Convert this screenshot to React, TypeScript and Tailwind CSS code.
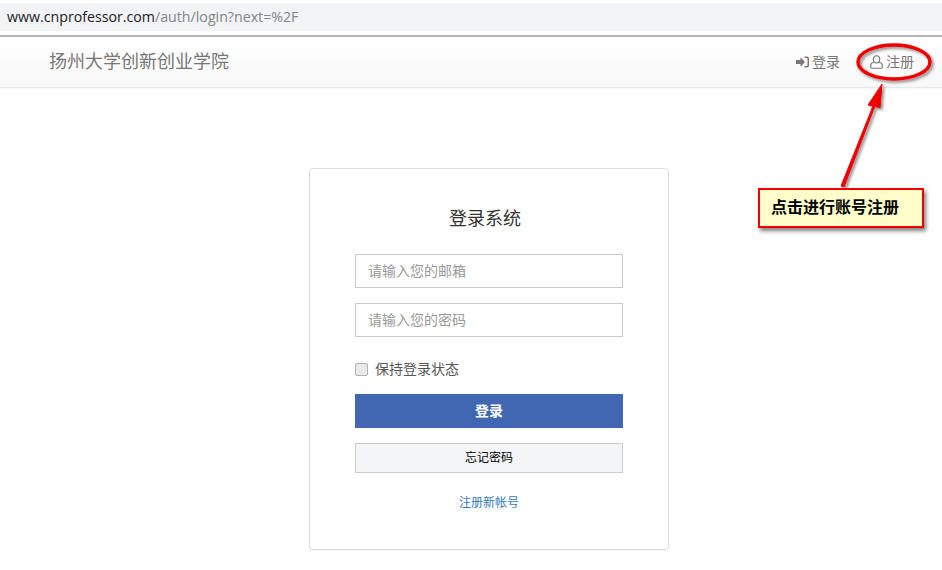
const CJK = "font-['Liberation_Sans','Noto_Sans_CJK_SC',sans-serif]";

function SignInIcon() {
  return (
    <svg width="13" height="12" viewBox="0 0 13 12" fill="currentColor">
      <path d="M0 4h4.500V1.200L9 6l-4.500 4.800V8H0z" />
      <path d="M8.500 0.500H11c1.100 0 2 .9 2 2v7c0 1.100-.9 2-2 2H8.500V10H11c.3 0 .5-.2.500-.5v-7c0-.3-.2-.5-.5-.5H8.500z" />
    </svg>
  );
}

function UserOutlineIcon() {
  return (
    <svg width="13" height="14" viewBox="0 0 13 14" fill="none" stroke="currentColor" strokeWidth="1.100">
      <path d="M6.500 0.800c1.900 0 3.200 1.600 3.200 3.500S8.400 8 6.500 8 3.300 6.200 3.300 4.300 4.600 0.800 6.500 0.800z" />
      <path d="M4 7.300C2 7.500 0.700 8.800 0.700 11v1c0 .7.5 1.200 1.200 1.200h9.200c.7 0 1.200-.5 1.200-1.200v-1c0-2.200-1.300-3.500-3.300-3.700" />
    </svg>
  );
}

// red marks drawn on top of the screenshot
function Annotation() {
  return (
    <>
      <svg className="absolute left-0 top-0 pointer-events-none" width="942" height="570">
        <defs>
          <filter id="sh" x="-20%" y="-20%" width="150%" height="150%">
            <feDropShadow dx="2" dy="2" stdDeviation="1.500" floodColor="#000" floodOpacity="0.45" />
          </filter>
        </defs>
        <ellipse cx="894" cy="62" rx="36" ry="17" fill="none" stroke="#f00000" strokeWidth="3.500" filter="url(#sh)" />
        <path d="M841 186 L873 106 L868 105 L882 84 L880 108 L875 106 L844 187 Z" fill="#f00000" stroke="#f00000" strokeWidth="1" strokeLinejoin="round" filter="url(#sh)" />
      </svg>
      <div className="absolute left-[758px] top-[188px] flex h-[40px] w-[166px] items-center border-2 border-[#f00000] bg-[#ffffcc] pl-[11px] text-[16px] font-bold text-black shadow-[2px_3px_4px_rgba(0,0,0,0.5)]">
        点击进行账号注册
      </div>
    </>
  );
}

export default function App() {
  return (
    <div className={`relative h-[570px] w-[942px] overflow-hidden bg-white ${CJK}`}>
      <div className="pt-[3px]">
        <div className="flex h-[28px] items-center bg-[#f1f3f4] pl-[7px] font-['Open_Sans',sans-serif] text-[14.2px]">
          <span className="text-[#202124]">www.cnprofessor.com</span>
          <span className="text-[#80868b]">/auth/login?next=%2F</span>
        </div>
      </div>
      <div className="mt-[4px] h-[2px] bg-[#b4b4b4]" />

      <nav className="flex h-[51px] items-center justify-between border-b border-[#e7e7e7] bg-gradient-to-b from-white to-[#f8f8f8] pl-[49px] pr-[28px] shadow-[0_1px_2px_rgba(0,0,0,0.04)]">
        <span className="text-[18px] text-[#777777]">扬州大学创新创业学院</span>
        <div className="flex items-center gap-[30px] text-[14px] text-[#777777]">
          <span className="flex items-center gap-[3px]">
            <SignInIcon />
            登录
          </span>
          <span className="flex items-center gap-[3px]">
            <UserOutlineIcon />
            注册
          </span>
        </div>
      </nav>

      <div className="mt-[80px] flex">
        <div className="ml-[309px] flex h-[382px] w-[360px] flex-col rounded-[4px] border border-[#dddddd] px-[45px] pt-[37px] shadow-[0_1px_1px_rgba(0,0,0,0.05)]">
          <h3 className="pr-[8px] text-center text-[18px] leading-[26px] text-[#333333]">登录系统</h3>
          <div className="mt-[22px] flex h-[34px] items-center border border-[#c9c9c9] pl-[12px] text-[14px] text-[#999999]">
            请输入您的邮箱
          </div>
          <div className="mt-[15px] flex h-[34px] items-center border border-[#c9c9c9] pl-[12px] text-[14px] text-[#999999]">
            请输入您的密码
          </div>
          <label className="mt-[22px] flex h-[20px] items-center gap-[7px] text-[14px] text-[#555555]">
            <span className="h-[13px] w-[13px] rounded-[2px] border border-[#b0b0b0] bg-[#e9e9e9]" />
            保持登录状态
          </label>
          <button className="mt-[15px] h-[34px] shrink-0 bg-[#4267b2] text-[14px] font-bold text-white">登录</button>
          <button className="mt-[15px] h-[30px] shrink-0 border border-[#cccccc] bg-[#f4f5f7] text-[12px] text-black">忘记密码</button>
          <a className="mt-[21px] text-center text-[12px] leading-[18px] text-[#337ab7]">注册新帐号</a>
        </div>
      </div>

      <Annotation />
    </div>
  );
}
